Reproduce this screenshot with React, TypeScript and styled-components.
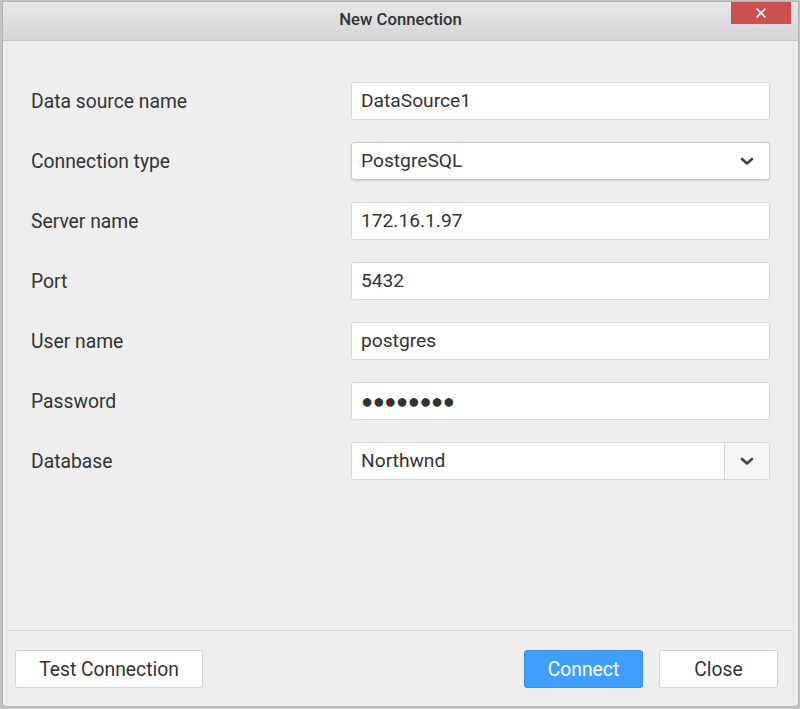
import React from "react";
import styled, { createGlobalStyle } from "styled-components";

const Global = createGlobalStyle`
  html, body { margin: 0; padding: 0; background: #c2c2c2; }
  body { font-family: Roboto, "Liberation Sans", sans-serif; }
  * { box-sizing: border-box; }
`;

const Window = styled.div`
  margin: 2px 2px 3px 3px;
  height: 704px;
  background: #eeeeee;
  border-radius: 0 0 4px 4px;
  display: flex;
  flex-direction: column;
  overflow: hidden;
  box-shadow: 0 0 0 1px #b4b4b4;
`;

const TitleBar = styled.div`
  position: relative;
  height: 39px;
  flex: none;
  background: linear-gradient(#e7e6e8, #d5d4d6);
  border-bottom: 1px solid #c4c4c4;
  display: flex;
  align-items: center;
  justify-content: center;
  padding-bottom: 4px;
  font-size: 16.7px;
  font-weight: 500;
  color: #333;
`;

const CloseX = styled.button`
  position: absolute;
  top: 0;
  right: 7px;
  width: 60px;
  height: 22px;
  border: none;
  padding: 0;
  background: #c9504f;
  display: flex;
  align-items: center;
  justify-content: center;
`;

const Body = styled.div`
  flex: 1;
  display: flex;
  flex-direction: column;
  margin: 0 4px;
  border-left: 1px solid #e6e6e6;
  border-right: 1px solid #e6e6e6;
`;

const Form = styled.div`
  display: grid;
  grid-template-columns: 320px 419px;
  row-gap: 22px;
  padding: 41px 0 0 23px;
  align-items: center;
`;

const Label = styled.div`
  font-size: 19.3px;
  color: #333;
`;

const Field = styled.div<{ $shadow?: boolean }>`
  height: 38px;
  background: #fff;
  border: 1px solid ${(p) => (p.$shadow ? "#c9c9c9" : "#d6d6d6")};
  border-radius: 3px;
  display: flex;
  align-items: center;
  color: #333;
  box-shadow: ${(p) => (p.$shadow ? "0 1px 2px rgba(0,0,0,0.12)" : "none")};
  overflow: hidden;
`;

const FieldText = styled.div<{ $dots?: boolean }>`
  flex: 1;
  padding-left: 9px;
  padding-bottom: 1px;
  font-size: ${(p) => (p.$dots ? "20px" : "19.2px")};
  letter-spacing: ${(p) => (p.$dots ? "-0.4px" : "0")};
  color: #333;
`;

const ChevronBox = styled.div<{ $button?: boolean }>`
  width: ${(p) => (p.$button ? "45px" : "44px")};
  align-self: stretch;
  display: flex;
  align-items: center;
  justify-content: center;
  background: ${(p) => (p.$button ? "#f6f6f6" : "transparent")};
  border-left: ${(p) => (p.$button ? "1px solid #dcdcdc" : "none")};
`;

const Footer = styled.div`
  margin-top: auto;
  border-top: 1px solid #d3d3d3;
  display: flex;
  align-items: center;
  padding: 19px 15px 18px 7px;
  gap: 16px;
`;

const Spacer = styled.div`
  flex: 1;
`;

const Button = styled.button<{ $primary?: boolean; $w: number }>`
  width: ${(p) => p.$w}px;
  height: 38px;
  font-family: Roboto, "Liberation Sans", sans-serif;
  font-size: 19.3px;
  color: ${(p) => (p.$primary ? "#fff" : "#333")};
  background: ${(p) => (p.$primary ? "#409eff" : "#fff")};
  border: 1px solid ${(p) => (p.$primary ? "#3a90ea" : "#d4d4d4")};
  border-radius: 3px;
  padding: 0;
`;

const Chevron = () => (
  <svg width="14" height="9" viewBox="0 0 14 9">
    <polyline points="2,2 7,6.5 12,2" fill="none" stroke="#444" strokeWidth="2.6" strokeLinecap="round" strokeLinejoin="round" />
  </svg>
);

const XIcon = () => (
  <svg width="12" height="12" viewBox="0 0 12 12">
    <path d="M1.5 1.5 L10.5 10.5 M10.5 1.5 L1.5 10.5" stroke="#fff" strokeWidth="1.6" />
  </svg>
);

export default function App() {
  return (
    <>
      <Global />
      <Window>
        <TitleBar>
          New Connection
          <CloseX aria-label="Close">
            <XIcon />
          </CloseX>
        </TitleBar>
        <Body>
          <Form>
            <Label>Data source name</Label>
            <Field>
              <FieldText>DataSource1</FieldText>
            </Field>
            <Label>Connection type</Label>
            <Field $shadow>
              <FieldText>PostgreSQL</FieldText>
              <ChevronBox>
                <Chevron />
              </ChevronBox>
            </Field>
            <Label>Server name</Label>
            <Field>
              <FieldText>172.16.1.97</FieldText>
            </Field>
            <Label>Port</Label>
            <Field>
              <FieldText>5432</FieldText>
            </Field>
            <Label>User name</Label>
            <Field>
              <FieldText>postgres</FieldText>
            </Field>
            <Label>Password</Label>
            <Field>
              <FieldText $dots>●●●●●●●●</FieldText>
            </Field>
            <Label>Database</Label>
            <Field>
              <FieldText>Northwnd</FieldText>
              <ChevronBox $button>
                <Chevron />
              </ChevronBox>
            </Field>
          </Form>
          <Footer>
            <Button $w={188}>Test Connection</Button>
            <Spacer />
            <Button $primary $w={119}>Connect</Button>
            <Button $w={119}>Close</Button>
          </Footer>
        </Body>
      </Window>
    </>
  );
}
